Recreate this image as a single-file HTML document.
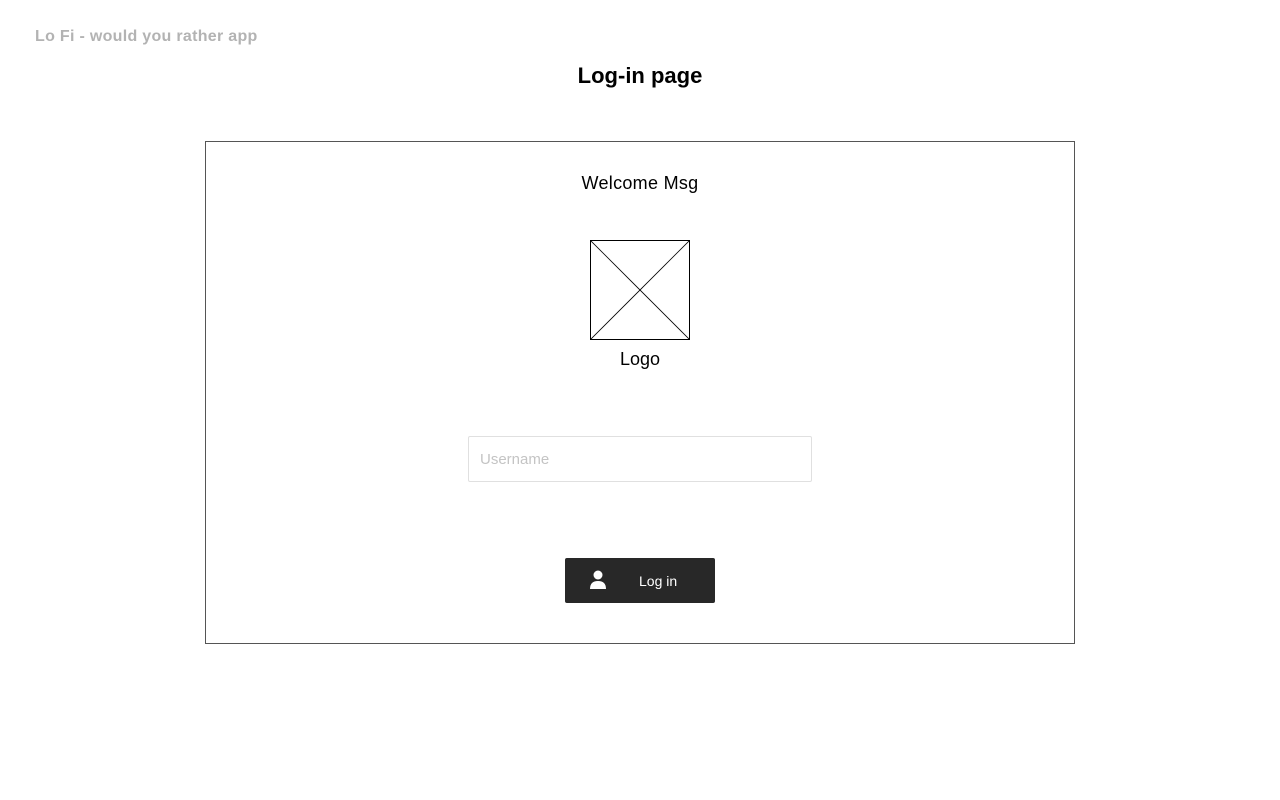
<!DOCTYPE html>
<html><head><meta charset="utf-8"><style>
body{margin:0;width:1280px;height:800px;background:#fff;font-family:"Liberation Sans",sans-serif;position:relative;overflow:hidden}
.a{position:absolute}
</style></head><body>
<div class="a" style="left:35px;top:28px;font-size:16px;font-weight:bold;color:#b3b3b3;letter-spacing:0.3px">Lo Fi - would you rather app</div>
<div class="a" style="left:0;width:1280px;top:63px;text-align:center;font-size:22px;font-weight:bold;color:#000">Log-in page</div>
<div class="a" style="left:205px;top:141px;width:868px;height:501px;border:1px solid #555"></div>
<div class="a" style="left:0;width:1280px;top:173px;text-align:center;font-size:18px;color:#000;letter-spacing:0.3px">Welcome Msg</div>
<svg class="a" style="left:590px;top:240px" width="100" height="100"><rect x="0.5" y="0.5" width="99" height="99" fill="#fff" stroke="#000"/><line x1="0" y1="0" x2="100" y2="100" stroke="#000" stroke-width="0.8"/><line x1="100" y1="0" x2="0" y2="100" stroke="#000" stroke-width="0.8"/></svg>
<div class="a" style="left:0;width:1280px;top:349px;text-align:center;font-size:18px;color:#000">Logo</div>
<div class="a" style="left:468px;top:436px;width:342px;height:44px;border:1px solid #e0e0e0;border-radius:2px"></div>
<div class="a" style="left:480px;top:451px;font-size:15px;color:#c4c4c4">Username</div>
<div class="a" style="left:565px;top:558px;width:150px;height:45px;background:#282828;border-radius:2px"></div>
<svg class="a" style="left:589px;top:570px" width="18" height="19"><circle cx="9" cy="5" r="4.5" fill="#fff"/><path d="M1 19 Q1 11 9 11 Q17 11 17 19 Z" fill="#fff"/></svg>
<div class="a" style="left:639px;top:573px;font-size:14px;color:#fff">Log in</div>
</body></html>
